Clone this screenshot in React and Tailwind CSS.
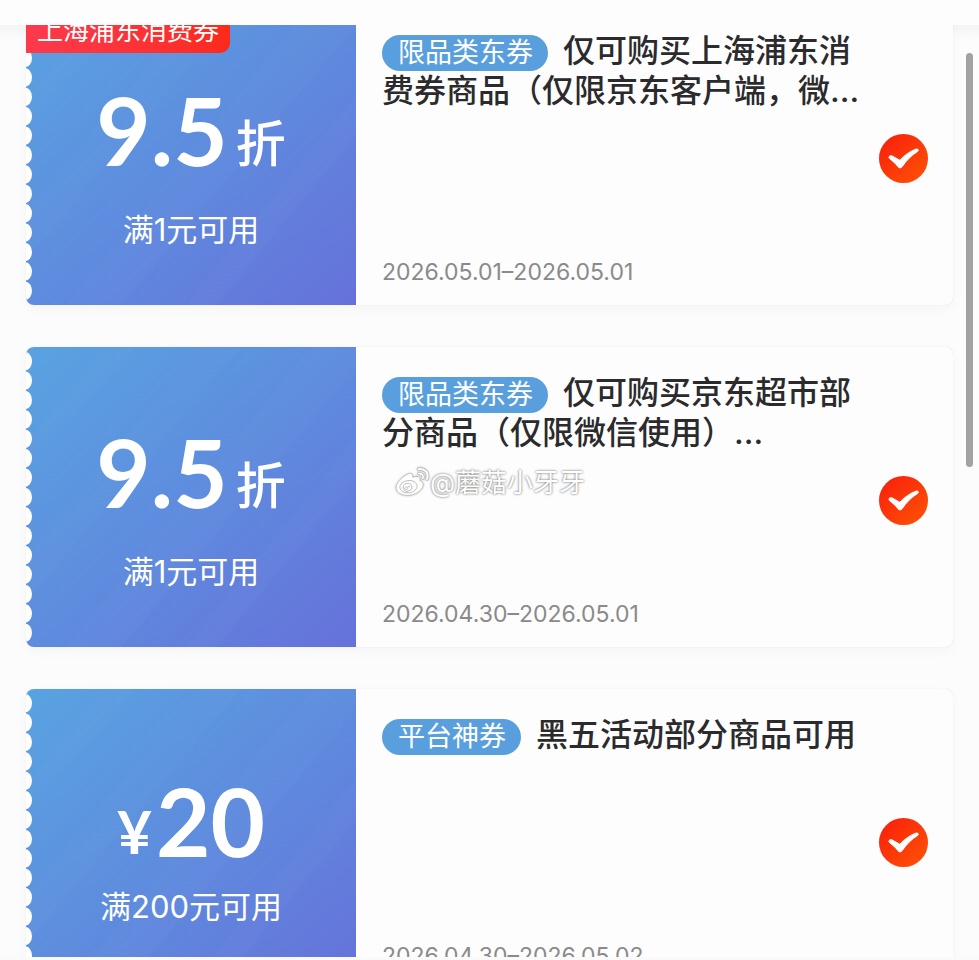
import { useState } from "react";

const coupons = [
  {
    id: 1,
    corner: "上海浦东消费券",
    amount: "9.5",
    suffix: "折",
    rule: "满1元可用",
    tag: "限品类东券",
    title: "仅可购买上海浦东消费券商品（仅限京东客户端，微...",
    date: "2026.05.01–2026.05.01",
  },
  {
    id: 2,
    amount: "9.5",
    suffix: "折",
    rule: "满1元可用",
    tag: "限品类东券",
    title: "仅可购买京东超市部分商品（仅限微信使用）...",
    date: "2026.04.30–2026.05.01",
  },
  {
    id: 3,
    prefix: "¥",
    amount: "20",
    rule: "满200元可用",
    tag: "平台神券",
    title: "黑五活动部分商品可用",
    date: "2026.04.30–2026.05.02",
  },
];

// Diagonal light streaks and the scalloped left edge of the ticket
function TicketBackground({ id }) {
  return (
    <svg
      className="absolute inset-0 h-full w-full"
      viewBox="0 0 330 300"
      preserveAspectRatio="none"
      aria-hidden="true"
    >
      <defs>
        <linearGradient id={`ticket-${id}`} x1="0" y1="0" x2="1" y2="1">
          <stop offset="0" stopColor="#59a3e1" />
          <stop offset="0.5" stopColor="#5e8cde" />
          <stop offset="1" stopColor="#6671da" />
        </linearGradient>
        <linearGradient id={`streak-${id}`} x1="0" y1="0" x2="1" y2="1">
          <stop offset="0" stopColor="#ffffff" stopOpacity="0" />
          <stop offset="1" stopColor="#ffffff" stopOpacity="0.03" />
        </linearGradient>
      </defs>
      <rect width="330" height="300" fill={`url(#ticket-${id})`} />
      <g fill={`url(#streak-${id})`}>
        <path d="M110 0H80L0 95V125Z" />
        <path d="M215 0H175L0 205V255Z" />
        <path d="M330 20V0H285L40 300H95Z" />
        <path d="M330 130V90L160 300H190Z" />
      </g>
      {Array.from({ length: 15 }).map((_, i) => (
        <ellipse key={i} cx="-1" cy={14.2 + i * 19.4} rx="7" ry="9.2" fill="#fefefe" />
      ))}
    </svg>
  );
}

function CheckMark() {
  return (
    <svg viewBox="0 0 49 49" className="h-[49px] w-[49px]" aria-hidden="true">
      <defs>
        <linearGradient id="check-fill" x1="0" y1="0" x2="1" y2="1">
          <stop offset="0" stopColor="#f91c0c" />
          <stop offset="1" stopColor="#ff5505" />
        </linearGradient>
      </defs>
      <circle cx="24.5" cy="24.5" r="24.5" fill="url(#check-fill)" />
      <path
        d="M10.2 22.4C11 21.2 12.6 21.6 14 22.4L20.8 26.3C25.4 21.4 31 17.2 36.8 15.2C39 14.5 40.3 16.3 38.6 17.5C32.6 21 27.3 26.6 23.2 32.6C22 34.3 20.2 34.3 19 32.7C16.5 29.5 13.8 27 10.9 24.9C9.9 24.2 9.7 23.2 10.2 22.4Z"
        fill="#fff"
        stroke="#fff"
        strokeWidth="1"
      />
    </svg>
  );
}

function WeiboLogo() {
  return (
    <svg
      viewBox="0 0 36 32"
      className="h-8 w-9 drop-shadow-[0_0_1px_rgba(0,0,0,0.25)]"
      fill="none"
      stroke="#b5b5b5"
      strokeWidth="0.8"
      aria-hidden="true"
    >
      <path
        d="M13 8.5C16.5 6.5 19.5 7.5 18.7 11.3C23 9.6 27 10.2 25.8 14.5C29.5 15.8 30.3 19.3 27.5 23C24 27.5 17.5 30 11.5 29.3C5 28.6 1.3 25 2.2 20.3C3.2 15.7 8.5 10.7 13 8.5Z"
        fill="#fff"
      />
      <ellipse cx="14.5" cy="20.7" rx="8.7" ry="6.2" transform="rotate(-8 14.5 20.7)" fill="#fdfdfd" />
      <ellipse cx="13.5" cy="21.3" rx="4.3" ry="3.9" transform="rotate(-20 13.5 21.3)" fill="#fff" />
      <circle cx="12.3" cy="22.2" r="1.4" />
      <circle cx="15" cy="20.5" r="0.6" />
      <g strokeLinecap="round">
        <path d="M24.5 3.2C30.8 2 35 7.2 33 13" strokeWidth="3.4" />
        <path d="M24.5 3.2C30.8 2 35 7.2 33 13" stroke="#fff" strokeWidth="2" />
        <path d="M24.8 7.7C28 7.2 29.8 9.5 28.9 12.3" strokeWidth="2.9" />
        <path d="M24.8 7.7C28 7.2 29.8 9.5 28.9 12.3" stroke="#fff" strokeWidth="1.6" />
      </g>
    </svg>
  );
}

function CouponCard({ coupon, checked, onToggle }) {
  return (
    <li className="flex min-h-[300px] rounded-lg bg-[#fdfdfd] shadow-[0_0_1px_rgba(0,0,0,0.15),0_4px_14px_rgba(0,0,0,0.03)]">
      {/* Ticket */}
      <div className="relative w-[330px] shrink-0 overflow-hidden rounded-l-lg text-white">
        <TicketBackground id={coupon.id} />
        {coupon.corner && (
          <span className="absolute top-0 left-0 rounded-br-[10px] bg-linear-to-r from-[#fc3a4c] to-[#fb2a1a] px-[11px] pt-1.5 pb-0.5 text-[26px] leading-10">
            {coupon.corner}
          </span>
        )}
        <div
          className={`relative flex h-full flex-col items-center ${
            coupon.prefix ? "gap-4 pt-[84px]" : "gap-[30px] pt-[77px]"
          }`}
        >
          <p className="flex items-end font-['Lato','Noto_Sans_CJK_SC',sans-serif]">
            {coupon.prefix && (
              <span className="mr-1 mb-2 text-[60px] leading-none font-bold">{coupon.prefix}</span>
            )}
            <span className="text-[94px] leading-24 font-bold">{coupon.amount}</span>
            {coupon.suffix && (
              <span className="mb-2.5 ml-2 text-[50px] leading-none font-medium">
                {coupon.suffix}
              </span>
            )}
          </p>
          <p className="text-[31px] leading-[44px]">{coupon.rule}</p>
        </div>
      </div>

      {/* Details */}
      <div className="flex min-w-0 flex-1 justify-between gap-4 pr-[25px] pl-[26px]">
        <div className="flex min-w-0 flex-1 flex-col justify-between pt-[26px] pb-[17px]">
          <h2 className="text-[32px] leading-10 font-medium text-[#2b2a2c]">
            <span className="mr-[15px] inline-block rounded-full bg-[#5a9fdd] pr-[15px] pl-4 align-middle text-[27px] leading-9 font-normal text-white">
              {coupon.tag}
            </span>
            {coupon.title}
          </h2>
          <p className="text-[23px] leading-8 text-[#8a8a8a]">{coupon.date}</p>
        </div>
        <label className="cursor-pointer self-center pt-1.5">
          <input
            type="checkbox"
            className="peer sr-only"
            checked={checked}
            onChange={onToggle}
            aria-label={coupon.title}
          />
          <span className="block opacity-30 peer-checked:opacity-100">
            <CheckMark />
          </span>
        </label>
      </div>
    </li>
  );
}

function App() {
  const [selected, setSelected] = useState([1, 2, 3]);

  function toggle(id) {
    setSelected((prev) =>
      prev.includes(id) ? prev.filter((item) => item !== id) : [...prev, id]
    );
  }

  return (
    <div className="relative flex h-screen flex-col overflow-hidden bg-[#fdfdfd] font-['Inter','Noto_Sans_CJK_SC',sans-serif]">
      <header className="h-[25px] shrink-0 bg-[#fdfdfd]" />

      <main className="relative min-h-0 flex-1 overflow-hidden bg-linear-to-b from-[#f5f5f5] to-[#fcfcfc] to-[14px]">
        {/* List is scrolled slightly past the first card's top edge */}
        <ul className="-mt-5 flex flex-col gap-[42px] px-[26px]">
          {coupons.map((coupon) => (
            <CouponCard
              key={coupon.id}
              coupon={coupon}
              checked={selected.includes(coupon.id)}
              onToggle={() => toggle(coupon.id)}
            />
          ))}
        </ul>
        <div className="absolute top-7 right-1.5 h-[414px] w-[7px] rounded-full bg-[#a2a2a2]" />
      </main>

      <footer className="h-[3px] shrink-0 bg-[#fafafa]" />

      {/* Watermark */}
      <div className="pointer-events-none absolute inset-0 flex items-center justify-center pt-1 text-[26px] text-white">
        <WeiboLogo />
        <span className="[text-shadow:0_0_2px_rgba(0,0,0,0.4),0_0_3px_rgba(0,0,0,0.35)]">
          @蘑菇小牙牙
        </span>
      </div>
    </div>
  );
}

export default App;
